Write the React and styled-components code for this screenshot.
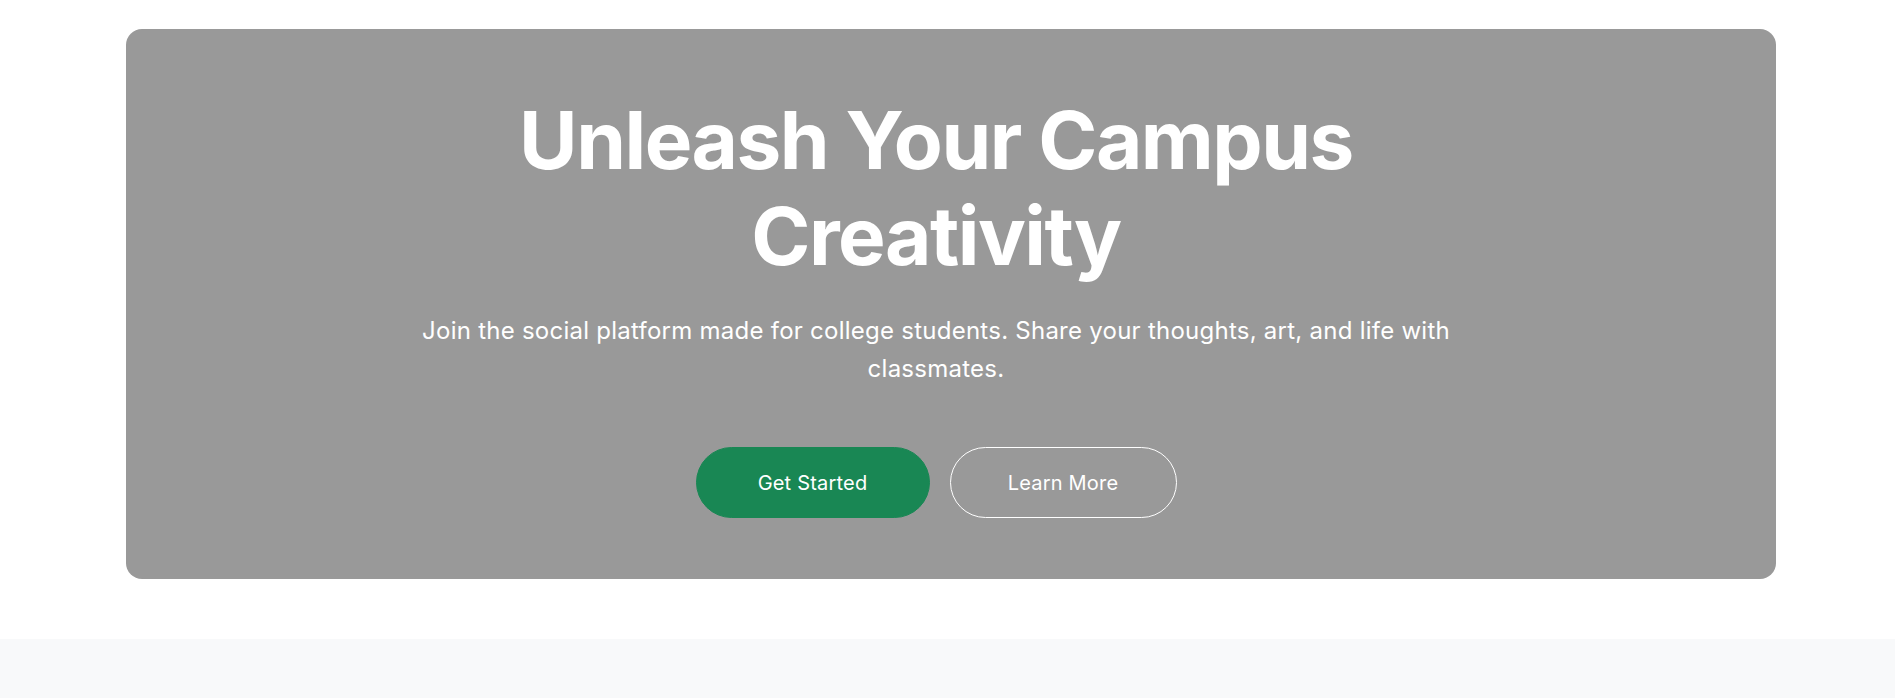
import styled, { createGlobalStyle } from 'styled-components'

const GlobalStyle = createGlobalStyle`
  body {
    margin: 0;
    background: #ffffff;
    font-family: Inter, "Noto Sans", sans-serif;
  }
`

const App = () => {
  return (
    <>
      <GlobalStyle />
      <Hero>
        <Card>
          <Titulo>
            Unleash Your Campus
            <br />
            Creativity
          </Titulo>
          <Subtitulo>
            Join the social platform made for college students. Share your thoughts, art, and life with classmates.
          </Subtitulo>
          <Actions>
            <Button $primary>Get Started</Button>
            <Button>Learn More</Button>
          </Actions>
        </Card>
      </Hero>
      <NextSection />
    </>
  )
}

export default App

const Hero = styled.section`
  padding: 29px 119px 60px 126px;
`

const Card = styled.div`
  background-color: #999999;
  border-radius: 16px;
  padding: 63px 62px 61px 32px;
  display: flex;
  flex-direction: column;
  align-items: center;
  text-align: center;
  color: #ffffff;
`

const Titulo = styled.h1`
  margin: 0;
  font-size: 80px;
  line-height: 96px;
  font-weight: 700;
  letter-spacing: -1.5px;
`

const Subtitulo = styled.p`
  margin: 28px 0 0;
  max-width: 1060px;
  font-size: 24px;
  line-height: 38px;
  font-weight: 400;
  letter-spacing: 0.25px;
`

const Actions = styled.div`
  display: flex;
  gap: 20px;
  margin-top: 59px;
`

const Button = styled.button`
  height: 71px;
  width: ${(p) => (p.$primary ? '234px' : '227px')};
  border-radius: 40px;
  border: 1px solid ${(p) => (p.$primary ? '#198754' : '#ffffff')};
  background-color: ${(p) => (p.$primary ? '#198754' : 'transparent')};
  color: #ffffff;
  font-family: Inter, "Noto Sans", sans-serif;
  font-size: 20px;
  font-weight: 400;
  letter-spacing: 0.2px;
  cursor: pointer;
`

const NextSection = styled.section`
  height: 60px;
  background-color: #f8f9fa;
`
